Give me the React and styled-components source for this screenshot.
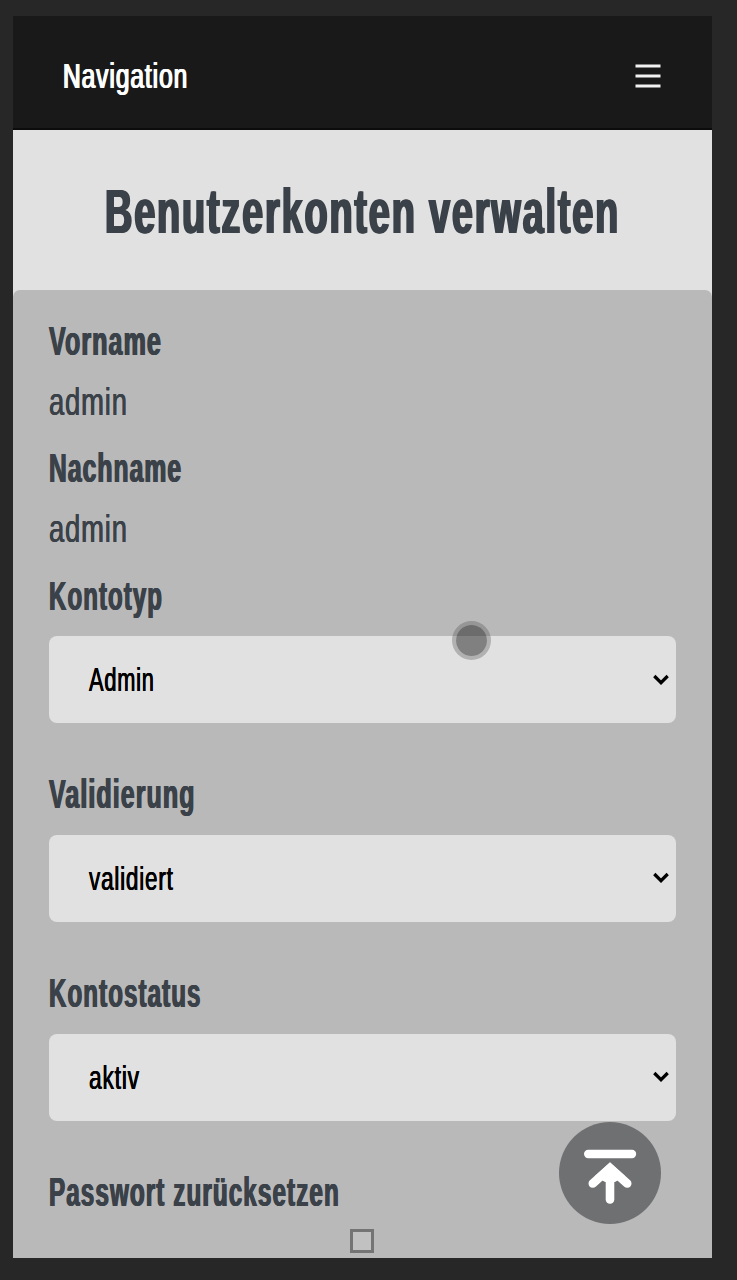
import React, { useLayoutEffect, useRef, useState } from "react";
import styled, { createGlobalStyle } from "styled-components";

const GlobalStyle = createGlobalStyle`
  * { box-sizing: border-box; }
  body {
    margin: 0;
    background: #272727;
    font-family: "Liberation Sans", Arial, sans-serif;
  }
`;

const Screen = styled.div`
  height: 1280px;
  padding: 16px 25px 22px 13px;
  overflow: hidden;
`;

const Page = styled.div`
  position: relative;
  display: flex;
  flex-direction: column;
  height: 1242px;
  background: #e1e1e1;
  overflow: hidden;
`;

const NavBar = styled.header`
  display: flex;
  align-items: center;
  justify-content: space-between;
  height: 114px;
  flex: none;
  padding: 8px 51px 0 50px;
  background: #191919;
  border-bottom: 2px solid #0c0c0c;
`;

const Title = styled.h1`
  display: flex;
  justify-content: center;
  height: 160px;
  flex: none;
  margin: 0;
  padding-top: 41px;
  line-height: 80px;
`;

const Panel = styled.main`
  flex: 1;
  padding: 21px 36px 0;
  background: #b9b9b9;
  border-radius: 7px 7px 0 0;
`;

const Label = styled.div`
  height: 61px;
  line-height: 61px;
`;

const Value = styled.div`
  height: 61px;
  margin-bottom: 5.25px;
  line-height: 59px;
`;

const Field = styled.section`
  margin-bottom: 41.3px;
`;

const SelectBox = styled.div`
  display: flex;
  align-items: center;
  justify-content: space-between;
  height: 87px;
  margin-top: 9.5px;
  padding: 7px 7px 0 40px;
  background: #e1e1e1;
  border-radius: 8px;
  line-height: 60px;
`;

const Chevron = styled.svg`
  width: 16px;
  height: 12px;
  margin-top: -7px;
`;

const Checkbox = styled.span`
  display: block;
  width: 24px;
  height: 24px;
  margin: 6px auto 0;
  border: 3px solid #747474;
  background: #c1c1c1;
`;

const CheckboxRow = styled.div`
  padding-right: 2px;
`;

const TopButton = styled.button`
  position: absolute;
  right: 51px;
  bottom: 34px;
  width: 102px;
  height: 102px;
  padding: 0;
  border: 0;
  border-radius: 50%;
  background: #6f7072;
`;

const TouchPointer = styled.span`
  position: absolute;
  left: 439px;
  top: 605px;
  width: 39px;
  height: 39px;
  border: 4px solid rgba(80, 80, 80, 0.33);
  border-radius: 50%;
  background: rgba(32, 32, 32, 0.5);
  background-clip: padding-box;
`;

const Slot = styled.span`
  display: block;
  width: ${(p) => p.$width}px;
`;

const Glyphs = styled.span`
  display: inline-block;
  white-space: nowrap;
  transform-origin: 0 50%;
  font-size: ${(p) => p.$size}px;
  font-weight: ${(p) => (p.$bold ? 700 : 400)};
  color: ${(p) => p.$color};
  letter-spacing: ${(p) => p.$track || 0}px;
  text-shadow: ${(p) =>
    p.$heavy ? `${p.$heavy}px 0 0 currentColor, -${p.$heavy}px 0 0 currentColor` : "none"};
`;

/* Sets a line in a condensed cut, fitted to the given width. */
function Condensed({ width, size, bold, color = "#3a4148", heavy, track, children }) {
  const ref = useRef(null);
  const [scale, setScale] = useState(1);
  useLayoutEffect(() => {
    setScale(width / ref.current.offsetWidth);
  }, [width]);
  return (
    <Slot $width={width}>
      <Glyphs
        ref={ref}
        $size={size}
        $bold={bold}
        $color={color}
        $heavy={heavy}
        $track={track}
        style={{ transform: `scaleX(${scale})` }}
      >
        {children}
      </Glyphs>
    </Slot>
  );
}

function FieldLabel({ text, width }) {
  return (
    <Label>
      <Condensed width={width} size={40.5} bold heavy={0.9} track={1.8}>{text}</Condensed>
    </Label>
  );
}

function SelectField({ label, labelWidth, value, valueWidth }) {
  return (
    <Field>
      <FieldLabel text={label} width={labelWidth} />
      <SelectBox>
        <Condensed width={valueWidth} size={33} color="#000" heavy={0.5} track={1.2}>{value}</Condensed>
        <Chevron viewBox="0 0 16 12" fill="none" stroke="#000" strokeWidth="3.2">
          <path d="M1.3 2 8 8.7 14.7 2" />
        </Chevron>
      </SelectBox>
    </Field>
  );
}

export default function App() {
  return (
    <>
      <GlobalStyle />
      <Screen>
        <Page>
          <NavBar>
            <Condensed width={125} size={35} color="#fff" heavy={0.9} track={1.4}>Navigation</Condensed>
            <svg width="26" height="24" viewBox="0 0 26 24" stroke="#f2f2f2" strokeWidth="3">
              <path d="M.5 2H25.5M.5 12H25.5M.5 22H25.5" />
            </svg>
          </NavBar>
          <Title>
            <Condensed width={515} size={63} bold heavy={1.6} track={3}>Benutzerkonten verwalten</Condensed>
          </Title>
          <Panel>
            <FieldLabel text="Vorname" width={113} />
            <Value><Condensed width={79} size={39.5} heavy={0.4} track={1.2}>admin</Condensed></Value>
            <FieldLabel text="Nachname" width={133} />
            <Value><Condensed width={79} size={39.5} heavy={0.4} track={1.2}>admin</Condensed></Value>
            <SelectField label="Kontotyp" labelWidth={114} value="Admin" valueWidth={66} />
            <SelectField label="Validierung" labelWidth={146.5} value="validiert" valueWidth={85} />
            <SelectField label="Kontostatus" labelWidth={152.5} value="aktiv" valueWidth={51} />
            <FieldLabel text="Passwort zurücksetzen" width={291} />
            <CheckboxRow><Checkbox /></CheckboxRow>
          </Panel>
          <TopButton aria-label="Nach oben">
            <svg width="102" height="102" viewBox="0 0 102 102" fill="none" stroke="#fff" strokeLinecap="round">
              <path d="M29.2 32H73" strokeWidth="8.4" />
              <path d="M51 48V77.5" strokeWidth="8.6" />
              <path d="M33.8 61.5 51 46 68.2 61.5" strokeWidth="8.6" />
              <path d="M51 40.5 66 54 56 60H46L36 54Z" fill="#fff" stroke="none" />
            </svg>
          </TopButton>
          <TouchPointer />
        </Page>
      </Screen>
    </>
  );
}
